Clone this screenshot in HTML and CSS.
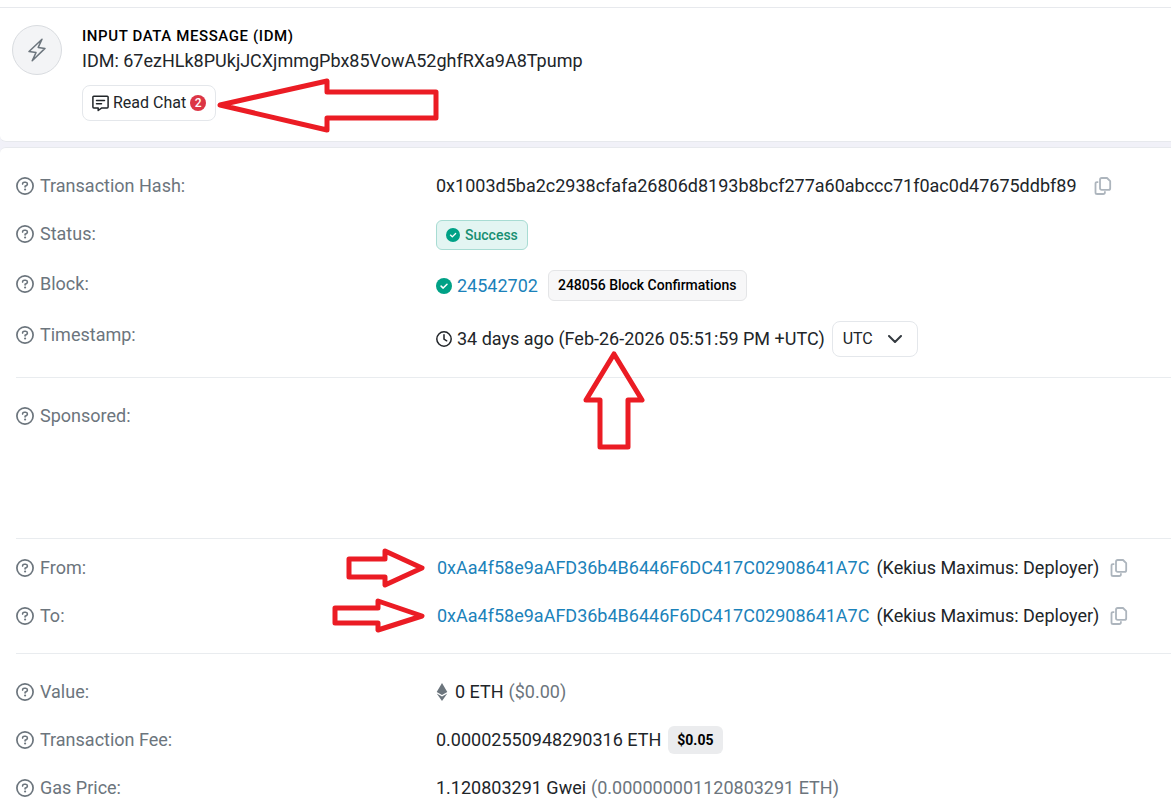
FILE: index.html
```
<!DOCTYPE html>
<html lang="en">
<head>
<meta charset="utf-8">
<meta name="viewport" content="width=device-width, initial-scale=1">
<title>Transaction Details</title>
<link rel="stylesheet" href="styles.css">
</head>
<body>
<svg class="sprite" aria-hidden="true">
  <symbol id="help" viewBox="0 0 18 18">
    <circle cx="9" cy="9" r="8.1" fill="none" stroke="currentColor" stroke-width="1.7"/>
    <path d="M6.6 7.1V6.7Q6.7 5.3 8.2 5.3H9.7Q11.4 5.4 11.4 7Q11.4 7.9 10.5 8.5L9.1 9.3V10" fill="none" stroke="currentColor" stroke-width="1.6" stroke-linecap="round" stroke-linejoin="round"/>
    <circle cx="9.1" cy="12.5" r="1.1" fill="currentColor"/>
  </symbol>
  <symbol id="copy" viewBox="0 0 18 18">
    <path d="M7.7 1H13L16.2 4.2V11.2Q16.2 12.9 14.5 12.9H7.7Q6 12.9 6 11.2V2.7Q6 1 7.7 1Z" fill="none" stroke="currentColor" stroke-width="1.8" stroke-linejoin="round"/>
    <path d="M3.4 5.1H3Q1.5 5.1 1.5 6.6V15.4Q1.5 17 3.1 17H9.2Q10.9 17 10.9 15.2" fill="none" stroke="currentColor" stroke-width="1.8" stroke-linecap="square"/>
  </symbol>
  <symbol id="check" viewBox="0 0 16 16">
    <circle cx="8" cy="8" r="8" fill="currentColor"/>
    <path d="M5.1 8.1L7.2 10.1L11 6.2" fill="none" stroke="#fff" stroke-width="1.5" stroke-linecap="round" stroke-linejoin="round"/>
  </symbol>
</svg>
<main class="page">
  <section class="card message">
    <div class="avatar">
      <svg class="bolt" viewBox="0 0 20 24" aria-hidden="true"><path d="M15 1.3L2 13.5L9 14.6L5.2 22.7L18 10.4L11.2 9.4Z" fill="none" stroke="currentColor" stroke-width="1.5" stroke-linejoin="round"/></svg>
    </div>
    <div class="message-body">
      <h1 class="message-title">Input Data Message (IDM)</h1>
      <p class="message-text">IDM: 67ezHLk8PUkjJCXjmmgPbx85VowA52ghfRXa9A8Tpump</p>
      <button class="chat" type="button">
        <svg class="chat-icon" viewBox="0 0 17 17" aria-hidden="true"><path d="M1.8 1.2H15.2Q16.1 1.2 16.1 2.1V12Q16.1 12.9 15.2 12.9H9.8L6.2 15.5V12.9H1.8Q.9 12.9 .9 12V2.1Q.9 1.2 1.8 1.2ZM4.5 5.4H12.5M4.5 8.7H9.5" fill="none" stroke="currentColor" stroke-width="1.5" stroke-linecap="round" stroke-linejoin="round"/></svg>
        <span>Read Chat</span>
        <span class="count">2</span>
      </button>
    </div>
  </section>

  <section class="card details">
    <dl class="group">
      <div class="row"><dt><svg class="help"><use href="#help"/></svg>Transaction Hash:</dt>
        <dd><span>0x1003d5ba2c2938cfafa26806d8193b8bcf277a60abccc71f0ac0d47675ddbf89</span><button class="copy wide" type="button" aria-label="Copy transaction hash"><svg><use href="#copy"/></svg></button></dd></div>
      <div class="row"><dt><svg class="help"><use href="#help"/></svg>Status:</dt>
        <dd><span class="badge success"><svg class="check-small"><use href="#check"/></svg>Success</span></dd></div>
      <div class="row"><dt><svg class="help"><use href="#help"/></svg>Block:</dt>
        <dd><svg class="check"><use href="#check"/></svg><a href="#block">24542702</a><span class="badge confirmations">248056 Block Confirmations</span></dd></div>
      <div class="row"><dt><svg class="help"><use href="#help"/></svg>Timestamp:</dt>
        <dd><svg class="clock" viewBox="0 0 16 16" aria-hidden="true"><circle cx="8" cy="8" r="7.2"/><path d="M8 3.8V8L10.7 9.8"/></svg><span>34 days ago (Feb-26-2026 05:51:59 PM +UTC)</span><span class="zone"><select aria-label="Time zone"><option>UTC</option><option>Local</option></select><svg class="chevron" viewBox="0 0 14 8" aria-hidden="true"><path d="M1 1L7 7L13 1"/></svg></span></dd></div>
    </dl>
    <dl class="group sponsored">
      <div class="row"><dt><svg class="help"><use href="#help"/></svg>Sponsored:</dt><dd></dd></div>
    </dl>
    <dl class="group parties">
      <div class="row"><dt><svg class="help"><use href="#help"/></svg>From:</dt>
        <dd><a href="#from">0xAa4f58e9aAFD36b4B6446F6DC417C02908641A7C</a><span>(Kekius Maximus: Deployer)</span><button class="copy" type="button" aria-label="Copy sender address"><svg><use href="#copy"/></svg></button></dd></div>
      <div class="row"><dt><svg class="help"><use href="#help"/></svg>To:</dt>
        <dd><a href="#to">0xAa4f58e9aAFD36b4B6446F6DC417C02908641A7C</a><span>(Kekius Maximus: Deployer)</span><button class="copy" type="button" aria-label="Copy recipient address"><svg><use href="#copy"/></svg></button></dd></div>
    </dl>
    <dl class="group">
      <div class="row"><dt><svg class="help"><use href="#help"/></svg>Value:</dt>
        <dd><svg class="eth" viewBox="0 0 12 18" aria-hidden="true"><path d="M6 0L11.3 9L6 12.1L.7 9ZM.7 10.5L6 13.6L11.3 10.5L6 18Z" fill="currentColor"/></svg><span>0 ETH</span><span class="muted">($0.00)</span></dd></div>
      <div class="row"><dt><svg class="help"><use href="#help"/></svg>Transaction Fee:</dt>
        <dd><span>0.00002550948290316 ETH</span><span class="badge price">$0.05</span></dd></div>
      <div class="row"><dt><svg class="help"><use href="#help"/></svg>Gas Price:</dt>
        <dd><span>1.120803291 Gwei</span><span class="muted">(0.000000001120803291 ETH)</span></dd></div>
    </dl>
  </section>

  <svg class="arrow arrow-chat" viewBox="216 76 224 58" aria-hidden="true"><path d="M220 105L327 81V92H436V118H327V130Z"/></svg>
  <svg class="arrow arrow-time" viewBox="582 350 64 102" aria-hidden="true"><path d="M614 354L642 400H628V447H600V400H586Z"/></svg>
  <svg class="arrow arrow-from" viewBox="344 547 82 42" aria-hidden="true"><path d="M349 559H385V551L422 568L385 585V577H349Z"/></svg>
  <svg class="arrow arrow-to" viewBox="330 596 96 38" aria-hidden="true"><path d="M335 608H378V601L422 616L378 630V623H335Z"/></svg>
</main>
</body>
</html>
```
FILE: styles.css
```
* { box-sizing: border-box; }

body {
  margin: 0;
  background: #f1f1f8;
  color: #212529;
  font-family: Roboto, "Liberation Sans", sans-serif;
  font-size: 18px;
  line-height: 28px;
}

h1, p, dl, dd { margin: 0; }
a { color: #1b82ba; text-decoration: none; }
button, select { font: inherit; color: inherit; }
svg { display: block; flex: none; }

.sprite { position: absolute; width: 0; height: 0; }

.page { position: relative; padding-top: 7px; box-shadow: inset 0 7px #fff; }

.card {
  background: #fff;
  border: 1px solid #e7e9ed;
  border-width: 1px 0;
}

.message {
  display: flex;
  gap: 20px;
  padding: 17px 12px 20px;
  border-bottom-left-radius: 6px;
}

.avatar {
  display: grid;
  place-items: center;
  flex: none;
  width: 50px;
  height: 50px;
  border: 1px solid #d9dce0;
  border-radius: 50%;
  background: #f3f4f6;
  color: #6c757d;
}

.bolt { width: 20px; height: 24px; }

.message-title {
  color: #000;
  font-size: 15px;
  font-weight: 500;
  line-height: 22px;
  letter-spacing: 0.04em;
  text-transform: uppercase;
}

.message-text { line-height: 28px; }

.chat {
  display: flex;
  align-items: center;
  gap: 4px;
  height: 36px;
  margin-top: 10px;
  padding: 0 9px;
  border: 1px solid #e4e7eb;
  border-radius: 8px;
  background: #fff;
  font-size: 16px;
}

.chat-icon { width: 17px; height: 17px; }

.count {
  width: 16px;
  height: 16px;
  border-radius: 50%;
  background: #dc3545;
  color: #fff;
  font-size: 12px;
  font-weight: 500;
  line-height: 16px;
  text-align: center;
}

.details {
  margin-top: 5px;
  padding-left: 16px;
  border-bottom: 0;
  border-top-left-radius: 6px;
}

.group {
  display: grid;
  gap: 20px;
  padding: 24px 0 20px;
}

.group + .group { border-top: 1px solid #e9ecef; }
.group.sponsored { padding-bottom: 108px; }
.group.parties { padding: 15px 0 23px; }

.row { display: grid; grid-template-columns: 420px 1fr; }

dt {
  display: flex;
  align-items: center;
  gap: 6px;
  height: 27px;
  color: #6c757d;
}

dd {
  display: flex;
  align-items: center;
  gap: 5px;
  min-height: 28px;
  white-space: nowrap;
}

.parties dd { gap: 7px; padding-left: 1px; }
.muted { color: #6c757d; }
.help { width: 18px; height: 18px; }

.check, .clock { width: 16px; height: 16px; }
.check { color: #00a186; }
.check-small { width: 14px; height: 14px; color: #00a186; }

.clock { fill: none; stroke: currentColor; stroke-width: 1.5; stroke-linecap: round; }

.eth { width: 12px; height: 18px; margin-right: 2px; color: #6c757d; }

.copy {
  margin-left: 4px;
  padding: 0;
  border: 0;
  background: none;
  color: #adb5bd;
}

.copy.wide { margin-left: 12px; }
.copy svg { width: 18px; height: 18px; }

.badge {
  display: flex;
  align-items: center;
  gap: 5px;
  padding: 0 9px;
  border: 1px solid #e4e5e7;
  border-radius: 6px;
  font-size: 14px;
  font-weight: 500;
  line-height: 28px;
}

.badge.success { border-color: #a8dcd3; background: #e3f5f2; color: #178f72; }
.badge.confirmations { margin-left: 5px; background: #f7f7f8; color: #000; line-height: 29px; }
.badge.price { margin-left: 2px; border: 0; background: #ebecee; color: #000; font-weight: 700; }

.zone { position: relative; margin-left: 2px; }

.zone select {
  display: block;
  width: 86px;
  height: 36px;
  padding: 0 10px;
  border: 1px solid #e4e7eb;
  border-radius: 8px;
  background: #fff;
  font-size: 16px;
  appearance: none;
}

.chevron {
  position: absolute;
  top: 14px;
  right: 16px;
  width: 14px;
  height: 8px;
  fill: none;
  stroke: #343a40;
  stroke-width: 2;
  stroke-linecap: round;
  stroke-linejoin: round;
  pointer-events: none;
}

.arrow {
  position: absolute;
  fill: none;
  stroke: #eb1c24;
  stroke-width: 5;
  stroke-linejoin: round;
  pointer-events: none;
}

.arrow-chat { left: 216px; top: 76px; width: 224px; height: 58px; }
.arrow-time { left: 582px; top: 350px; width: 64px; height: 102px; }
.arrow-from { left: 344px; top: 547px; width: 82px; height: 42px; }
.arrow-to { left: 330px; top: 596px; width: 96px; height: 38px; }
```
